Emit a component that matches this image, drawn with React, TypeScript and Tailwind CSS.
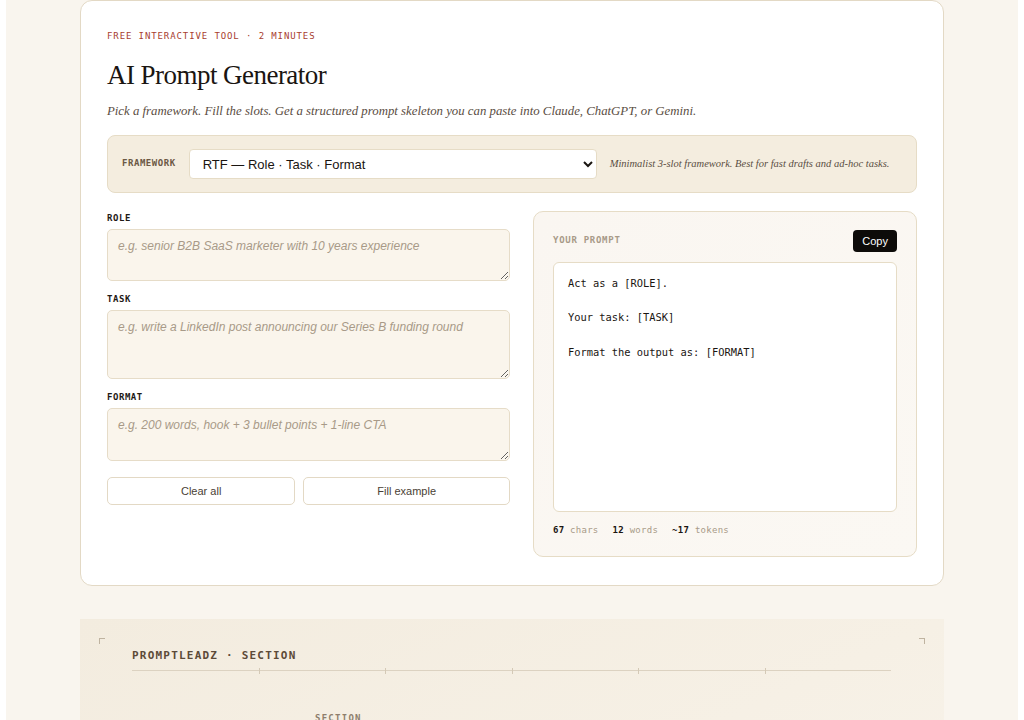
import React, { useState } from "react";

const mono = "font-['DejaVu_Sans_Mono',monospace]";
const serif = "font-['Liberation_Serif',serif]";
const sans = "font-['Liberation_Sans',Arial,sans-serif]";

const FRAMEWORKS = [
  "RTF — Role · Task · Format",
  "RACE — Role · Action · Context · Example",
  "CO-STAR — Context · Objective · Style · Tone · Audience · Response",
];

function Field({
  label,
  placeholder,
  height,
}: {
  label: string;
  placeholder: string;
  height: string;
}) {
  return (
    <div className="flex flex-col">
      <label
        className={`${mono} text-[9px] leading-[12px] font-bold tracking-[0.06em] text-[#1f1a16] mb-[5px]`}
      >
        {label}
      </label>
      <textarea
        placeholder={placeholder}
        className={`${sans} ${height} w-full rounded-[5px] border border-[#e6dcc8] bg-[#faf5ec] px-[10px] py-[8px] text-[12px] leading-[16px] text-[#2a221b] placeholder:italic placeholder:text-[#a89a88] outline-none`}
      />
    </div>
  );
}

export default function App() {
  const [fw, setFw] = useState(FRAMEWORKS[0]);
  const ticks = [1, 2, 3, 4, 5];

  return (
    <div className="min-h-screen bg-white px-[6px]">
      <div className="min-h-[1200px] bg-[#f9f5ee] px-[74px] pb-10">
        {/* Tool card */}
        <section className="rounded-[12px] border border-[#e3d9c5] bg-white px-[26px] pt-[29px] pb-[28px]">
          <p
            className={`${mono} text-[9px] leading-[12px] tracking-[0.1em] text-[#a8402f]`}
          >
            FREE INTERACTIVE TOOL · 2 MINUTES
          </p>
          <h1
            className={`${serif} mt-[16px] text-[27px] leading-[34px] tracking-[-0.02em] text-[#1a1511]`}
          >
            AI Prompt Generator
          </h1>
          <p
            className={`${serif} mt-[9px] text-[12.8px] leading-[20px] italic text-[#5a4d42]`}
          >
            Pick a framework. Fill the slots. Get a structured prompt skeleton
            you can paste into Claude, ChatGPT, or Gemini.
          </p>

          {/* Framework picker */}
          <div className="mt-[14px] flex items-center rounded-[8px] border border-[#e6dcc6] bg-[#f4eddf] px-[14px] py-[13px]">
            <span
              className={`${mono} text-[9px] font-bold tracking-[0.06em] text-[#6b5844]`}
            >
              FRAMEWORK
            </span>
            <select
              value={fw}
              onChange={(e) => setFw(e.target.value)}
              className={`${sans} ml-[13px] h-[30px] w-[408px] rounded-[4px] border border-[#e6dcc6] bg-white px-[9px] text-[13px] text-[#1a1511]`}
            >
              {FRAMEWORKS.map((f) => (
                <option key={f}>{f}</option>
              ))}
            </select>
            <span
              className={`${serif} ml-[13px] text-[10.5px] italic text-[#5a4d42]`}
            >
              Minimalist 3-slot framework. Best for fast drafts and ad-hoc
              tasks.
            </span>
          </div>

          <div className="mt-[18px] flex gap-[23px]">
            {/* Slots */}
            <div className="flex w-[403px] flex-col">
              <div className="pt-[1px]">
                <Field
                  label="ROLE"
                  placeholder="e.g. senior B2B SaaS marketer with 10 years experience"
                  height="h-[52px]"
                />
              </div>
              <div className="mt-[12px]">
                <Field
                  label="TASK"
                  placeholder="e.g. write a LinkedIn post announcing our Series B funding round"
                  height="h-[69px]"
                />
              </div>
              <div className="mt-[12px]">
                <Field
                  label="FORMAT"
                  placeholder="e.g. 200 words, hook + 3 bullet points + 1-line CTA"
                  height="h-[53px]"
                />
              </div>
              <div className="mt-[16px] flex gap-[8px]">
                <button
                  className={`${sans} h-[28px] flex-auto rounded-[5px] border border-[#e3d9c5] bg-white text-[11px] text-[#4a3f35]`}
                >
                  Clear all
                </button>
                <button
                  className={`${sans} h-[28px] flex-auto rounded-[5px] border border-[#e3d9c5] bg-white text-[11px] text-[#4a3f35]`}
                >
                  Fill example
                </button>
              </div>
            </div>

            {/* Output */}
            <div className="flex h-[346px] w-[384px] flex-col rounded-[10px] border border-[#e6dcc6] bg-gradient-to-br from-[#faf6f1] to-[#fbf8f3] px-[19px] pt-[18px] pb-[20px]">
              <div className="flex items-center justify-between">
                <span
                  className={`${mono} text-[9px] font-bold tracking-[0.08em] text-[#a89a88]`}
                >
                  YOUR PROMPT
                </span>
                <button
                  className={`${sans} h-[22px] rounded-[4px] bg-[#0d0b09] px-[9px] text-[11px] text-white`}
                >
                  Copy
                </button>
              </div>
              <div
                className={`${mono} mt-[10px] h-[251px] whitespace-pre rounded-[6px] border border-[#e6dcc6] bg-white px-[14px] pt-[12px] pb-[13px] text-[10.4px] leading-[17.2px] text-[#1a1511]`}
              >
                {"Act as a [ROLE].\n\nYour task: [TASK]\n\nFormat the output as: [FORMAT]"}
              </div>
              <div
                className={`${mono} mt-[12px] flex gap-[14px] text-[9px] leading-[12px] tracking-[0.03em]`}
              >
                <span>
                  <b className="text-[#1a1511]">67</b>{" "}
                  <span className="text-[#a89a88]">chars</span>
                </span>
                <span>
                  <b className="text-[#1a1511]">12</b>{" "}
                  <span className="text-[#a89a88]">words</span>
                </span>
                <span>
                  <b className="text-[#1a1511]">~17</b>{" "}
                  <span className="text-[#a89a88]">tokens</span>
                </span>
              </div>
            </div>
          </div>
        </section>

        {/* Section banner */}
        <section className="relative mt-[33px] h-[400px] bg-gradient-to-br from-[#f3ecdf] via-[#f6f0e5] to-[#f9f5ee] px-[52px] pt-[30px]">
          <span className="absolute left-[19px] top-[19px] h-[6px] w-[6px] border-l border-t border-[#bfb3a0]" />
          <span className="absolute right-[19px] top-[19px] h-[6px] w-[6px] border-r border-t border-[#bfb3a0]" />
          <p
            className={`${mono} text-[11px] font-bold leading-[14px] tracking-[0.11em] text-[#5c4a38]`}
          >
            PROMPTLEADZ · SECTION
          </p>
          <div className="relative mt-[5px] h-[6px] w-[759px]">
            <div className="absolute left-0 right-0 top-[2px] h-[1px] bg-[#dcd2c1]" />
            {ticks.map((i) => (
              <span
                key={i}
                className="absolute top-0 h-[6px] w-[1px] bg-[#d4c9b6]"
                style={{ left: `${i * 126.6}px` }}
              />
            ))}
          </div>
          <p
            className={`${mono} ml-[183px] mt-[38px] text-[9px] font-bold tracking-[0.14em] text-[#8e7e6c]`}
          >
            SECTION
          </p>
        </section>
      </div>
    </div>
  );
}
